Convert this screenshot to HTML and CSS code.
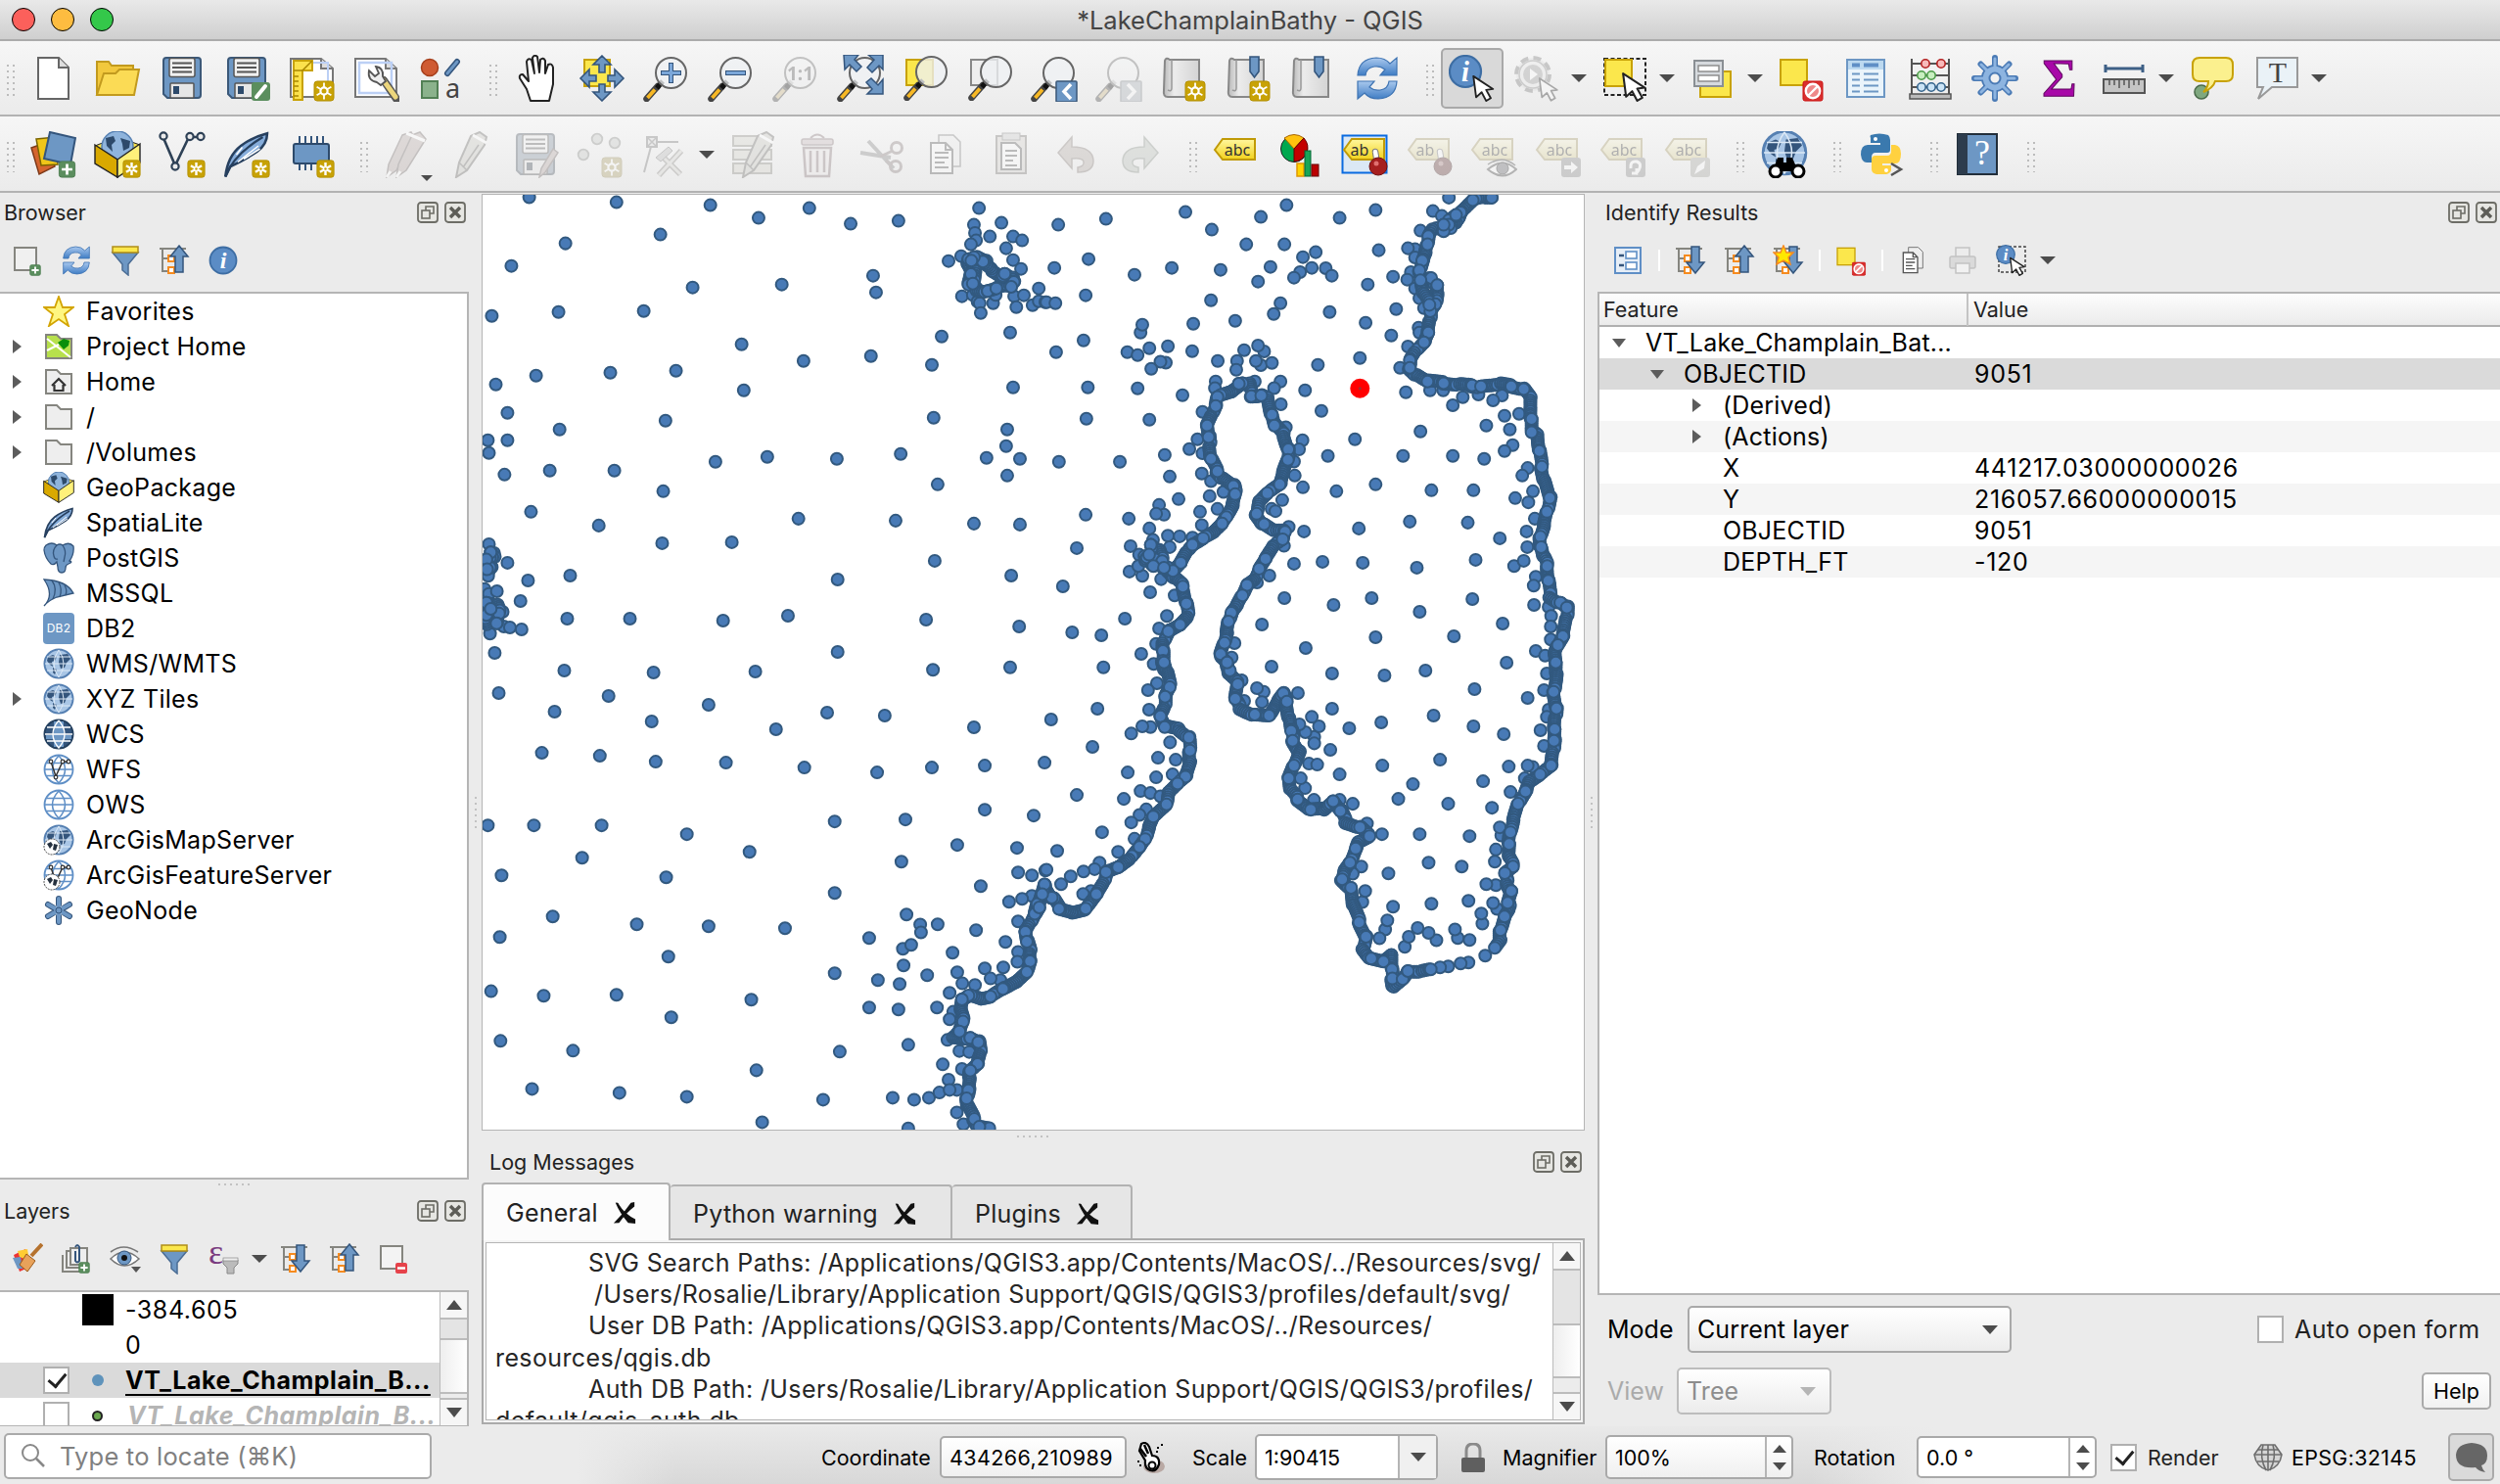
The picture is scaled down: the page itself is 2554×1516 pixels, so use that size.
FILE: index.html
```html
<!DOCTYPE html>
<html lang="en">
<head>
<meta charset="utf-8">
<title>*LakeChamplainBathy - QGIS</title>
<link rel="stylesheet" href="styles.css">
</head>
<body>
<svg class="defs" width="0" height="0" aria-hidden="true">
<defs>
<linearGradient id="paper" x1="0" y1="0" x2="1" y2="0"><stop offset="0" stop-color="#b9b9b9"/><stop offset=".3" stop-color="#ececec"/><stop offset="1" stop-color="#d4d4d4"/></linearGradient>
<linearGradient id="swirl" x1="0" y1="0" x2="0" y2="1"><stop offset="0" stop-color="#a9c8ee"/><stop offset="1" stop-color="#3f7dc4"/></linearGradient>
<linearGradient id="tagfill" x1="0" y1="0" x2="0" y2="1"><stop offset="0" stop-color="#fff7a0"/><stop offset="1" stop-color="#f2d21c"/></linearGradient>

<symbol id="badge-star" viewBox="0 0 22 22"><rect x="1" y="1" width="20" height="20" rx="3" fill="#c8a206" stroke="#b38f00" stroke-width="1"/><path d="M11 3.500V18.500M4.500 7.200L17.500 14.800M17.500 7.200L4.500 14.800" stroke="#fff" stroke-width="2.800"/><circle cx="11" cy="11" r="1.400" fill="#c8a206"/></symbol>
<symbol id="badge-sun" viewBox="0 0 22 22"><rect x="1" y="1" width="20" height="20" rx="3" fill="#c8a206" stroke="#b38f00" stroke-width="1"/><path d="M11 2.500V19.500M3.600 6.700L18.400 15.300M18.400 6.700L3.600 15.300" stroke="#fff" stroke-width="1.800"/><circle cx="11" cy="11" r="3.600" fill="#c8a206" stroke="#fff" stroke-width="2.200"/></symbol>
<symbol id="badge-plus" viewBox="0 0 20 20"><rect x="1" y="1" width="18" height="18" rx="3" fill="#5b8e5e" stroke="#4a7a4d"/><path d="M10 4V16M4 10H16" stroke="#fff" stroke-width="3"/></symbol>
<symbol id="badge-no" viewBox="0 0 22 22"><rect x="1" y="1" width="20" height="20" rx="2" fill="#d8302f" stroke="#c11"/><circle cx="11" cy="11" r="7.200" fill="#e88" stroke="#fff" stroke-width="2.400"/><path d="M6.500 15.500L15.500 6.500" stroke="#fff" stroke-width="2.400"/></symbol>
<symbol id="cursor" viewBox="0 0 26 30"><path d="M2 2L5 25L11 19.500L16 29L21 26L16 17L23.500 16Z" fill="#fff" stroke="#222" stroke-width="2" stroke-linejoin="round"/></symbol>
<symbol id="lens" viewBox="0 0 48 48"><path d="M3.500 45L15 32" stroke="#444" stroke-width="6.500" stroke-linecap="round"/><path d="M4.500 44L12 35.500" stroke="#f7b824" stroke-width="3.800"/><path d="M14 34L20 27" stroke="#111" stroke-width="5"/><circle cx="28.500" cy="18.500" r="15.500" fill="#eef1f3" fill-opacity=".78" stroke="#666" stroke-width="2"/></symbol>
<symbol id="floppy" viewBox="0 0 48 48"><path d="M8 3H40Q43 3 43 6V41Q43 44 40 44H9L5 40V6Q5 3 8 3Z" fill="#6d97c4" stroke="#3b5878" stroke-width="2"/><rect x="11" y="3.500" width="26" height="19" rx="2" fill="#f0f0f0" stroke="#555" stroke-width="1.500"/><path d="M14 8.500H34M14 13H34M14 17.500H34" stroke="#555" stroke-width="2"/><rect x="12" y="29" width="24" height="15" rx="1" fill="#e6e6e6" stroke="#555" stroke-width="1.500"/><rect x="15" y="32" width="6" height="8" fill="#2d4a6b"/></symbol>
<symbol id="scroll" viewBox="0 0 48 48"><path d="M10 5H40V43H8Q3 43 4 36L5 6Q6 2 10 5Z" fill="url(#paper)" stroke="#888" stroke-width="2"/><path d="M12 5V34Q12 38 8 36" fill="none" stroke="#999" stroke-width="1.500"/></symbol>
<symbol id="globe" viewBox="0 0 32 32"><circle cx="16" cy="16" r="14.500" fill="#a9c6e6" stroke="#5680b2" stroke-width="2"/><path d="M5 9L10 7L14 9L12 13L9 14L10 19L7 17L4 13ZM17 7L25 6L28 11L24 15L22 20L18 21L16 15ZM10 20L14 22L12 27L10 25Z" fill="#34557c"/><path d="M2 16H30M4 9H28M4 23H28M16 2Q6 16 16 30Q26 16 16 2" fill="none" stroke="#dce9f6" stroke-width="1"/></symbol>
<symbol id="wire" viewBox="0 0 32 32"><circle cx="16" cy="16" r="14.500" fill="#fff" stroke="#5f8fc6" stroke-width="1.800"/><path d="M2 16H30M4 9.500H28M4 22.500H28M16 2Q3 16 16 30Q29 16 16 2" fill="none" stroke="#5f8fc6" stroke-width="1.500"/></symbol>
<symbol id="feather" viewBox="0 0 32 32"><path d="M1.500 31Q3 17 12 10Q20 4 30 1.500Q30 9 23 14Q14 20 5 24Z" fill="#86addb" stroke="#27405f" stroke-width="1.700"/><path d="M1.500 31Q7 16 27 4" fill="none" stroke="#27405f" stroke-width="1.500"/><path d="M10 21L24 10M14 19L25 12M9 16L13 11" stroke="#fff" stroke-width="1"/></symbol>
<symbol id="vee" viewBox="0 0 48 48"><path d="M5 7L17 35L31 6H43" fill="none" stroke="#2e4156" stroke-width="2.600"/><g fill="#ececec" stroke="#2e4156" stroke-width="2.200"><circle cx="5" cy="5" r="3.600"/><circle cx="17" cy="36" r="3.600"/><circle cx="32" cy="5.500" r="3.600"/><circle cx="43" cy="5.500" r="3.600"/></g></symbol>
<symbol id="tag" viewBox="0 0 48 48"><path d="M3 19L11 8H44V29H11Z" fill="url(#tagfill)" stroke="#c09a06" stroke-width="2"/></symbol>
<symbol id="pen" viewBox="0 0 48 48"><path d="M24 5L33 1L40 6L38 14L20 40L9 47L12 32Z" fill="#c9c8b4" stroke="#6b675d" stroke-width="2"/><path d="M12 32L20 40M32 14L16 37" stroke="#6b675d" stroke-width="1.500"/><path d="M26 4L40 12" stroke="#fff" stroke-width="3"/></symbol>
<symbol id="folder" viewBox="0 0 32 32"><path d="M3 4H14L18 8H29V28H3Z" fill="#eee" stroke="#85857f" stroke-width="2"/></symbol>

<symbol id="i-new" viewBox="0 0 48 48"><path d="M9 3H30L40 13V45H9Z" fill="#fff" stroke="#666" stroke-width="2"/><path d="M30 3V13H40" fill="#ddd" stroke="#666" stroke-width="2"/></symbol>
<symbol id="i-open" viewBox="0 0 48 48"><path d="M3 41V7H15L18 11H40V18" fill="#f2c83d" stroke="#c29a1e" stroke-width="2"/><path d="M3 41L10 19L22 19L26 15H46L41 41Z" fill="#fbdb55" stroke="#c29a1e" stroke-width="2"/></symbol>
<symbol id="i-saveas" viewBox="0 0 48 48"><use href="#floppy"/><rect x="29" y="28" width="19" height="19" rx="3" fill="#5b8e5e"/><path d="M34 43L43 32" stroke="#fff" stroke-width="4" stroke-linecap="round"/></symbol>
<symbol id="i-newlayout" viewBox="0 0 48 48"><path d="M3 4H34L46 14V43H3Z" fill="#fff" stroke="#777" stroke-width="2"/><path d="M34 4V14H46" fill="#ddd" stroke="#777" stroke-width="2"/><path d="M20 8H41V38" fill="none" stroke="#bcd0f5" stroke-width="2"/><path d="M6 6H25V16H15V46H6Z" fill="#fbe14c" stroke="#c8a206" stroke-width="2"/><path d="M6 22H11M6 27H11M6 32H11M6 37H11M6 42H11M6 16L15 16L25 6" stroke="#a88600" stroke-width="1.500" fill="none"/><use href="#badge-sun" x="26" y="26" width="22" height="22"/></symbol>
<symbol id="i-layoutmgr" viewBox="0 0 48 48"><path d="M3 4H34L45 14V43H3Z" fill="#fff" stroke="#777" stroke-width="2"/><path d="M34 4V14H45" fill="#ddd" stroke="#777" stroke-width="2"/><rect x="7" y="8" width="33" height="31" fill="none" stroke="#bcd0f5" stroke-width="2.500"/><path d="M32 26L45 45" stroke="#555" stroke-width="8" stroke-linecap="round"/><path d="M31 25L44 43" stroke="#ecd67c" stroke-width="5" stroke-linecap="round"/><path d="M17 16Q15 26 25 28L29 31L34 27L31 22Q32 13 24 12L27 19L23 22Z" fill="#eee" stroke="#555" stroke-width="1.800"/></symbol>
<symbol id="i-style" viewBox="0 0 48 48"><circle cx="13" cy="13" r="8.500" fill="#cf5b33" stroke="#a63f1c" stroke-width="1.500"/><path d="M31 19L41 7" stroke="#34557c" stroke-width="6" stroke-linecap="round"/><path d="M31 19L41 7" stroke="#6d97c4" stroke-width="3" stroke-linecap="round"/><rect x="5" y="27" width="16" height="17" fill="#8bb28c" stroke="#528055" stroke-width="2"/><text x="29" y="44" class="glyph-a">a</text></symbol>
<symbol id="i-hand" viewBox="0 0 48 48"><path d="M17 47L13 35L6 24Q5 20 9 20L15 27L13 7Q14 3 18 5L21 19L19 3Q21 -1 24 2L26 18L27 5Q30 2 32 6L32 19L35 10Q39 8 40 13L40 30L36 47Z" fill="#fff" stroke="#222" stroke-width="2" stroke-linejoin="round"/></symbol>
<symbol id="i-pansel" viewBox="0 0 48 48"><rect x="6" y="5" width="26" height="27" fill="#fbe74c" stroke="#c8a206" stroke-width="2"/><path d="M24 1L33 10H27V18H21V10H15ZM24 47L33 38H27V30H21V38H15ZM2 24L11 15V21H18V27H11V33ZM46 24L37 15V21H30V27H37V33Z" fill="#6d97c4" stroke="#34557c" stroke-width="1.600"/></symbol>
<symbol id="i-zin" viewBox="0 0 48 48"><use href="#lens"/><path d="M28.500 8V29M18 18.500H39" stroke="#34557c" stroke-width="5"/><path d="M28.500 9V28M19 18.500H38" stroke="#7ba7d9" stroke-width="3"/></symbol>
<symbol id="i-zout" viewBox="0 0 48 48"><use href="#lens"/><path d="M18 18.500H39" stroke="#34557c" stroke-width="5"/><path d="M19 18.500H38" stroke="#7ba7d9" stroke-width="3"/></symbol>
<symbol id="i-z11" viewBox="0 0 48 48"><use href="#lens"/><text x="28.500" y="26" text-anchor="middle" class="glyph-11">1:1</text></symbol>
<symbol id="i-zfull" viewBox="0 0 48 48"><use href="#lens"/><path d="M7 0H22L18 5L25 12L20 17L13 10L8 15ZM47 0V15L43 11L36 18L31 13L38 5L32 0ZM47 40H31L36 35L30 28L35 24L42 31L47 25Z" fill="#6d97c4" stroke="#34557c" stroke-width="1.500"/></symbol>
<symbol id="i-zsel" viewBox="0 0 48 48"><rect x="5" y="5" width="27" height="26" fill="#fbe74c" stroke="#c8a206" stroke-width="2"/><use href="#lens" x="2" y="-1"/></symbol>
<symbol id="i-zlayer" viewBox="0 0 48 48"><rect x="5" y="5" width="27" height="26" fill="#eee" stroke="#888" stroke-width="2"/><use href="#lens" x="2" y="-1"/></symbol>
<symbol id="i-zlast" viewBox="0 0 48 48"><use href="#lens"/><rect x="26" y="27" width="21" height="21" rx="1" fill="#6d97c4" stroke="#3b5878" stroke-width="1.500"/><path d="M41 30L34 37.500L41 45" fill="none" stroke="#fff" stroke-width="3.500"/></symbol>
<symbol id="i-znext" viewBox="0 0 48 48"><use href="#lens"/><rect x="26" y="27" width="21" height="21" rx="1" fill="#9fb0c4" stroke="#7b8898" stroke-width="1.500"/><path d="M33 30L40 37.500L33 45" fill="none" stroke="#fff" stroke-width="3.500"/></symbol>
<symbol id="i-mapview" viewBox="0 0 48 48"><use href="#scroll"/><use href="#badge-sun" x="25" y="26" width="22" height="22"/></symbol>
<symbol id="i-bmnew" viewBox="0 0 48 48"><use href="#scroll"/><path d="M26 2H35V17L30.500 23L26 17Z" fill="#6d97c4" stroke="#34557c" stroke-width="1.600"/><use href="#badge-sun" x="25" y="26" width="22" height="22"/></symbol>
<symbol id="i-bm" viewBox="0 0 48 48"><use href="#scroll"/><path d="M26 2H35V17L30.500 23L26 17Z" fill="#6d97c4" stroke="#34557c" stroke-width="1.600"/></symbol>
<symbol id="i-refresh" viewBox="0 0 48 48"><path d="M4 21Q5 4 23 3Q32 3 37 9L44 3V21H27L32 15Q27 11 21 12Q13 13 12 21Z" fill="url(#swirl)" stroke="#3f74b3" stroke-width="1.200"/><path d="M44 27Q43 44 25 45Q16 45 11 39L4 45V27H21L16 33Q21 37 27 36Q35 35 36 27Z" fill="url(#swirl)" stroke="#3f74b3" stroke-width="1.200"/></symbol>
<symbol id="i-info" viewBox="0 0 32 32"><circle cx="16" cy="16" r="13.500" fill="#5b8cc5" stroke="#3d6da3" stroke-width="1.800"/><text x="16" y="24" text-anchor="middle" class="glyph-i">i</text></symbol>
<symbol id="i-identify" viewBox="0 0 48 48"><use href="#i-info" x="-2" y="-2" width="38" height="38"/><use href="#cursor" x="23" y="20" width="25" height="28"/></symbol>
<symbol id="gearshape" viewBox="0 0 48 48"><path d="M24 3V45M3 24H45M9.500 9.500L38.500 38.500M38.500 9.500L9.500 38.500" stroke="#4a7ab5" stroke-width="6" stroke-linecap="round"/><circle cx="24" cy="24" r="14" fill="#4a7ab5"/><path d="M24 4V44M4 24H44M10 10L38 38M38 10L10 38" stroke="#8db4e0" stroke-width="3" stroke-linecap="round"/><circle cx="24" cy="24" r="12.200" fill="#8db4e0"/><circle cx="24" cy="24" r="5.500" fill="#f1f1f1" stroke="#4a7ab5" stroke-width="2"/></symbol>
<symbol id="i-action" viewBox="0 0 48 48"><circle cx="20" cy="20" r="17" fill="#ddd" stroke="#777" stroke-width="4" stroke-dasharray="8 5.350"/><circle cx="20" cy="20" r="14" fill="#e8e8e8" stroke="#888" stroke-width="1.500"/><circle cx="20" cy="20" r="10" fill="#999"/><path d="M17 14L25 20L17 26Z" fill="#fff"/><use href="#cursor" x="25" y="22" width="22" height="26"/></symbol>
<symbol id="i-select" viewBox="0 0 48 48"><rect x="3" y="4" width="42" height="37" fill="none" stroke="#222" stroke-width="2" stroke-dasharray="4 2.500"/><rect x="4" y="5" width="27" height="27" fill="#fbe74c" stroke="#c8a206" stroke-width="2"/><use href="#cursor" x="19" y="17" width="29" height="31"/></symbol>
<symbol id="i-form" viewBox="0 0 48 48"><rect x="11" y="17" width="31" height="26" fill="#fbe74c" stroke="#c8a206" stroke-width="2"/><rect x="5" y="6" width="29" height="26" fill="#d6dade" stroke="#8a8f94" stroke-width="2"/><rect x="9" y="11" width="21" height="6" fill="#fff" stroke="#888" stroke-width="1.400"/><rect x="9" y="21" width="21" height="6" fill="#fff" stroke="#888" stroke-width="1.400"/></symbol>
<symbol id="i-desel" viewBox="0 0 48 48"><rect x="3" y="5" width="27" height="26" fill="#fbe74c" stroke="#c8a206" stroke-width="2"/><use href="#badge-no" x="25" y="26" width="22" height="22"/></symbol>
<symbol id="i-table" viewBox="0 0 48 48"><rect x="5" y="5" width="38" height="38" fill="#eaf4fb" stroke="#6d97c4" stroke-width="2"/><rect x="6" y="6" width="36" height="9" fill="#bcd9f0"/><path d="M10 10.500H18M22 10.500H37" stroke="#5f8fc6" stroke-width="4"/><path d="M10 19.500H18M22 19.500H37M10 25.500H18M22 25.500H37M10 31.500H18M22 31.500H37M10 37.500H18M22 37.500H37" stroke="#6d97c4" stroke-width="2"/></symbol>
<symbol id="i-abacus" viewBox="0 0 48 48"><path d="M5 4V41M43 4V41M4 9H44M4 21H44M4 33H44" stroke="#555" stroke-width="2" fill="none"/><rect x="3" y="40" width="42" height="5" fill="#bbb" stroke="#555" stroke-width="1.500"/><g stroke-width="1.600"><g fill="#f7baba" stroke="#b32020"><circle cx="19" cy="9" r="4.200"/><circle cx="35" cy="9" r="4.200"/></g><g fill="#c8eec0" stroke="#4b9a48"><circle cx="15" cy="21" r="4.200"/><circle cx="25" cy="21" r="4.200"/></g><g fill="#cbe4f6" stroke="#34648c"><circle cx="15" cy="33" r="4.200"/><circle cx="25" cy="33" r="4.200"/><circle cx="35" cy="33" r="4.200"/></g></g></symbol>
<symbol id="i-sigma" viewBox="0 0 48 48"><text x="24" y="42" text-anchor="middle" class="glyph-sigma">Σ</text></symbol>
<symbol id="i-measure" viewBox="0 0 48 48"><path d="M5 14H43M5 10V18M43 10V18" stroke="#3d5f85" stroke-width="3"/><rect x="3" y="25" width="42" height="14" fill="#c4c4c4" stroke="#555" stroke-width="2"/><path d="M9 26V31M14 26V31M19 26V34M24 26V31M29 26V34M34 26V31M39 26V31" stroke="#555" stroke-width="1.500"/></symbol>
<symbol id="i-tip" viewBox="0 0 48 48"><circle cx="13" cy="38" r="7" fill="#7fa87f" stroke="#4b6b4b" stroke-width="1.600"/><path d="M11 3H38Q45 3 45 10V20Q45 27 38 27H27Q25 34 15 38Q20 33 20 27H11Q4 27 4 20V10Q4 3 11 3Z" fill="#fbf08e" stroke="#c8a206" stroke-width="2"/></symbol>
<symbol id="i-textann" viewBox="0 0 48 48"><path d="M4 3H45V33H19L5 45L10 33H4Z" fill="#eaf2f7" stroke="#999" stroke-width="2"/><text x="25" y="28" text-anchor="middle" class="glyph-t">T</text></symbol>

<symbol id="i-dsm" viewBox="0 0 48 48"><path d="M2 17L16 12L26 36L10 44Z" fill="#d5652f" stroke="#7e3a1a" stroke-width="1.500"/><path d="M7 8L27 6L29 34L12 35Z" fill="#f0c619" stroke="#7a6400" stroke-width="1.500"/><path d="M21 1L47 7L42 34L15 28Z" fill="#6d97c4" stroke="#34557c" stroke-width="2"/><use href="#badge-plus" x="29" y="30" width="19" height="18"/></symbol>
<symbol id="boxglobe" viewBox="0 0 48 48"><path d="M1 15L24 6L47 14L24 28Z" fill="#f7e04a" stroke="#222" stroke-width="1"/><circle cx="24" cy="16" r="16" fill="#8fb4dc" stroke="#5680b2" stroke-width="1.500"/><path d="M12 7L20 5L22 10L18 14L19 21L13 15ZM27 7L37 10L36 17L30 20L29 13Z" fill="#2d4a6b"/><path d="M1 14L24 29V47L1 33Z" fill="#d9a900" stroke="#222" stroke-width="1.400"/><path d="M47 13L24 29V47L47 32Z" fill="#fff17a" stroke="#222" stroke-width="1.400"/></symbol>
<symbol id="i-gpkg" viewBox="0 0 48 48"><use href="#boxglobe"/><use href="#badge-star" x="29" y="29" width="19" height="19"/></symbol>
<symbol id="i-vnew" viewBox="0 0 48 48"><use href="#vee"/><use href="#badge-star" x="29" y="29" width="19" height="19"/></symbol>
<symbol id="i-feather" viewBox="0 0 48 48"><use href="#feather" x="0" y="0" width="48" height="48"/><use href="#badge-star" x="29" y="29" width="19" height="19"/></symbol>
<symbol id="i-chip" viewBox="0 0 48 48"><path d="M12 5V12M18 5V12M24 5V12M30 5V12M36 5V12M12 33V40M18 33V40M24 33V40" stroke="#34557c" stroke-width="2"/><rect x="6" y="13" width="36" height="20" rx="2" fill="#6d97c4" stroke="#2d4a6b" stroke-width="2"/><use href="#badge-star" x="29" y="29" width="19" height="19"/></symbol>
<symbol id="i-pencils" viewBox="0 0 48 48"><g fill="#c9a39b" stroke="#7c625d" stroke-width="1.500"><path d="M20 4L29 1L33 8L14 40L4 47L6 34Z"/><path d="M30 4L38 1L44 8L24 40L14 47L16 34Z"/></g><path d="M24 2L43 10M4 47L8 41M14 47L18 41" stroke="#fff" stroke-width="3"/></symbol>
<symbol id="i-saveed" viewBox="0 0 48 48"><use href="#floppy"/><path d="M42 18L47 22L34 42L28 47L30 38Z" fill="#c9a39b" stroke="#7c625d" stroke-width="1.500"/></symbol>
<symbol id="i-addpts" viewBox="0 0 48 48"><g fill="#c4c9c0" stroke="#858a80" stroke-width="1.800"><circle cx="21" cy="8" r="5.300"/><circle cx="39" cy="12" r="5.300"/><circle cx="7" cy="24" r="5.300"/></g><use href="#badge-sun" x="25" y="26" width="22" height="22"/></symbol>
<symbol id="i-vertex" viewBox="0 0 48 48"><path d="M11 12L3 42M11 11H38" stroke="#777" stroke-width="2"/><rect x="6" y="6" width="10" height="10" fill="#ddd" stroke="#777" stroke-width="2"/><path d="M6 6L16 16M16 6L6 16" stroke="#777" stroke-width="1.500"/><path d="M20 24L40 44M41 20L18 45" stroke="#8d887c" stroke-width="6"/><path d="M20 24L40 44M41 20L18 45" stroke="#d8d4c8" stroke-width="3"/><path d="M15 27L28 16L32 20L20 31Z" fill="#bbb" stroke="#777"/></symbol>
<symbol id="i-attrs" viewBox="0 0 48 48"><g fill="#d8d3bd" stroke="#8f8a74" stroke-width="2"><rect x="4" y="5" width="39" height="10"/><rect x="4" y="19" width="39" height="10"/><rect x="4" y="33" width="39" height="10"/></g><use href="#pen" x="5"/></symbol>
<symbol id="i-trash" viewBox="0 0 48 48"><path d="M17 7Q24 0 31 7" fill="none" stroke="#a07078" stroke-width="2"/><rect x="8" y="8" width="32" height="6" rx="2" fill="#d9b5ba" stroke="#a07078" stroke-width="1.500"/><path d="M10 17H38L36 46H12Z" fill="#f3e4e6" stroke="#a07078" stroke-width="2.500"/><path d="M17 20V42M24 20V42M31 20V42" stroke="#a07078" stroke-width="2.500"/></symbol>
<symbol id="i-cut" viewBox="0 0 48 48"><path d="M2 22L33 27M10 10L36 38" stroke="#888" stroke-width="4"/><circle cx="39" cy="17" r="5.500" fill="none" stroke="#9a7a7a" stroke-width="3"/><circle cx="38" cy="36" r="5.500" fill="none" stroke="#9a7a7a" stroke-width="3"/><path d="M22 26L35 20M28 30L34 35" stroke="#9a7a7a" stroke-width="3"/></symbol>
<symbol id="i-copy" viewBox="0 0 48 48"><path d="M16 4H31L38 11V36H16Z" fill="#eee" stroke="#777" stroke-width="1.500"/><path d="M8 12H23L30 19V43H8Z" fill="#fff" stroke="#555" stroke-width="2"/><path d="M23 12V19H30M12 22H26M12 27H26M12 32H22M12 37H26" fill="none" stroke="#555" stroke-width="2"/></symbol>
<symbol id="i-paste" viewBox="0 0 48 48"><rect x="9" y="5" width="30" height="38" fill="#d9cfc4" stroke="#7d746a" stroke-width="2"/><rect x="15" y="2" width="18" height="7" fill="#ccc" stroke="#777"/><path d="M14 12H28L34 18V39H14Z" fill="#fff" stroke="#555" stroke-width="2"/><path d="M18 20H30M18 25H30M18 30H26M18 35H30" stroke="#555" stroke-width="2"/></symbol>
<symbol id="i-undo" viewBox="0 0 48 48"><path d="M6 22L20 6V16Q41 16 42 30Q42 42 26 42V37Q33 36 32 31Q31 27 20 28V38Z" fill="#c3aa9a" stroke="#94796a" stroke-width="1.500"/></symbol>
<symbol id="i-redo" viewBox="0 0 48 48"><path d="M42 22L28 6V16Q7 16 6 30Q6 42 22 42V37Q15 36 16 31Q17 27 28 28V38Z" fill="#b3c3b0" stroke="#7d937c" stroke-width="1.500"/></symbol>
<symbol id="i-abc" viewBox="0 0 48 48"><use href="#tag"/><text x="26" y="25" text-anchor="middle" class="glyph-abc">abc</text></symbol>
<symbol id="i-diag" viewBox="0 0 48 48"><circle cx="18" cy="18" r="13.500" fill="#00a84f" stroke="#222"/><path d="M18 18L8 7Q18 0 28 7Z" fill="#ffc20e" stroke="#a60"/><path d="M18 18L28 7Q34 14 31 22Q26 31 18 31Z" fill="#c40000" stroke="#600"/><rect x="21" y="33" width="7" height="13" fill="#ffd400" stroke="#e09800" stroke-width="1.500"/><rect x="29" y="20" width="6" height="26" fill="#18a558" stroke="#063"/><rect x="36" y="34" width="7" height="12" fill="#b00" stroke="#600"/></symbol>
<symbol id="pin" viewBox="0 0 48 48"><path d="M35 21L37 33" stroke="#777" stroke-width="6.500" stroke-linecap="round"/><path d="M35 21L37 33" stroke="#fff" stroke-width="4.500" stroke-linecap="round"/><circle cx="38" cy="36" r="9" fill="#a61f1f" stroke="#6e1010"/><circle cx="36" cy="33" r="2.500" fill="#e07070"/></symbol>
<symbol id="i-abpin" viewBox="0 0 48 48"><use href="#tag"/><text x="20" y="25" text-anchor="middle" class="glyph-abc">ab</text><use href="#pin"/></symbol>
<symbol id="i-abpinsel" viewBox="0 0 48 48"><rect x="1.500" y="4.500" width="45" height="38" fill="#dbe8f5" stroke="#0a6be0" stroke-width="2"/><use href="#tag"/><text x="19" y="25" text-anchor="middle" class="glyph-abc">ab</text><use href="#pin"/></symbol>
<symbol id="i-abceye" viewBox="0 0 48 48"><use href="#i-abc" x="-1"/><path d="M18 39Q33 26 47 39Q33 52 18 39Z" fill="#fff" stroke="#444" stroke-width="2"/><circle cx="33" cy="38" r="6" fill="#667" stroke="#222"/><path d="M18 34Q33 24 46 35" fill="none" stroke="#444" stroke-width="1.500"/></symbol>
<symbol id="i-abcarr" viewBox="0 0 48 48"><use href="#i-abc" x="-1"/><rect x="27" y="27" width="20" height="20" rx="3" fill="#8c8c8c"/><path d="M30 35H37V31L44 37L37 43V39H30Z" fill="#fff"/></symbol>
<symbol id="i-abcrot" viewBox="0 0 48 48"><use href="#i-abc" x="-1"/><rect x="27" y="27" width="20" height="20" rx="3" fill="#8c8c8c"/><path d="M32 38Q31 30 38 31Q44 33 40 40L37 44M33 43H38V38" fill="none" stroke="#fff" stroke-width="3"/></symbol>
<symbol id="i-abcpen" viewBox="0 0 48 48"><use href="#i-abc" x="-1"/><rect x="27" y="27" width="20" height="20" rx="3" fill="#a9a798"/><path d="M31 44L34 36L42 30L41 38Z" fill="#fff"/></symbol>
<symbol id="i-globebino" viewBox="0 0 48 48"><use href="#globe" x="0" y="-2" width="48" height="48"/><path d="M12 41L17 27H23V32H26V27H32L38 41Z" fill="#000"/><circle cx="15" cy="41" r="6" fill="#fff" stroke="#000" stroke-width="3"/><circle cx="38" cy="41" r="6" fill="#fff" stroke="#000" stroke-width="3"/><rect x="19" y="33" width="14" height="8" fill="#000"/></symbol>
<symbol id="i-python" viewBox="0 0 48 48"><path d="M13 4Q22 1 31 4Q33 6 33 9V19Q33 22 30 22H18Q14 22 14 27V32H9Q4 32 3 24Q3 14 10 14H23V12H13V7Q12 5 13 4Z" fill="#3a79ae"/><path d="M34 14H38Q44 15 44 23Q44 33 38 33H25V35H34V40Q33 43 29 44H19Q14 43 14 39V29Q14 25 18 25H30Q34 25 34 20Z" fill="#ffd13f"/><circle cx="18" cy="8" r="2" fill="#fff"/><circle cx="29" cy="40" r="2" fill="#fff"/><path d="M34 33L44 39L34 45" fill="none" stroke="#555" stroke-width="2.500"/></symbol>
<symbol id="i-help" viewBox="0 0 48 48"><rect x="3" y="3" width="40" height="41" fill="#6d97c4" stroke="#222e3a" stroke-width="2"/><rect x="3" y="3" width="10" height="41" fill="#2d3c4d"/><text x="28" y="34" text-anchor="middle" class="glyph-q">?</text></symbol>

<symbol id="s-add" viewBox="0 0 32 32"><rect x="3" y="3" width="22" height="23" fill="#f0f0f0" stroke="#85857f" stroke-width="2"/><use href="#badge-plus" x="18" y="20" width="12" height="12"/></symbol>
<symbol id="s-filter" viewBox="0 0 32 32"><path d="M3 8H29L19 20V31L13 26V20Z" fill="#6d97c4" stroke="#4a6c94" stroke-width="1.500"/><rect x="3" y="2" width="26" height="6" fill="#fbe74c" stroke="#b08e1a" stroke-width="1.500"/></symbol>
<symbol id="s-tree" viewBox="0 0 32 32"><path d="M1 4H28M4 4V27H11M4 14H11" fill="none" stroke="#85857f" stroke-width="2"/><rect x="10" y="11" width="6" height="6" fill="#fff" stroke="#f68b1f" stroke-width="2"/><rect x="10" y="23" width="6" height="6" fill="#fff" stroke="#f68b1f" stroke-width="2"/></symbol>
<symbol id="s-up" viewBox="0 0 32 32"><use href="#s-tree"/><path d="M21 1L30 12H25V28H17V12H12Z" fill="#6d97c4" stroke="#34557c" stroke-width="1.500"/></symbol>
<symbol id="s-down" viewBox="0 0 32 32"><use href="#s-tree"/><path d="M21 29L30 18H25V2H17V18H12Z" fill="#6d97c4" stroke="#34557c" stroke-width="1.500"/></symbol>
<symbol id="s-stardown" viewBox="0 0 32 32"><use href="#s-down"/><path d="M11 1L14 8L21 8L16 13L18 20L11 16L4 20L6 13L1 8L8 8Z" fill="#ffe800" stroke="#f68b1f" stroke-width="1.500"/></symbol>
<symbol id="s-brush" viewBox="0 0 32 32"><path d="M2 12L14 6L19 24L8 29Z" fill="#e33"/><path d="M6 8L16 6L18 18L8 14Z" fill="#fc3"/><path d="M1 15L9 14L11 26L6 26Z" fill="#6d97c4"/><path d="M31 1L20 13" stroke="#b5722e" stroke-width="4"/><path d="M15 11L24 18L16 29L8 22Z" fill="#e8a25a" stroke="#9a5b1c"/></symbol>
<symbol id="s-group" viewBox="0 0 32 32"><path d="M2 12V29H20" fill="none" stroke="#85857f" stroke-width="2"/><path d="M6 8V25H22V8Z" fill="none" stroke="#85857f" stroke-width="2"/><rect x="10" y="5" width="17" height="17" fill="#eee" stroke="#85857f" stroke-width="2"/><path d="M15 8V18Q17 21 19 18V4Q17 0 15 4" fill="none" stroke="#34557c" stroke-width="2"/><use href="#badge-plus" x="18" y="19" width="12" height="12"/></symbol>
<symbol id="s-eye" viewBox="0 0 32 32"><path d="M1 9Q14 -1 29 9" fill="none" stroke="#777" stroke-width="1.600"/><path d="M1 16Q15 2 30 16Q15 30 1 16Z" fill="#fff" stroke="#777" stroke-width="1.600"/><circle cx="15" cy="15" r="7" fill="#6d97c4" stroke="#34557c"/><circle cx="15" cy="15" r="3" fill="#111"/><path d="M22 24H32L27 30Z" fill="#555"/></symbol>
<symbol id="s-expr" viewBox="0 0 32 32"><text x="1" y="21" class="glyph-eps">ε</text><path d="M16 17H31V21L27 25V31H20V25L16 21Z" fill="#bbb" stroke="#888"/><rect x="16" y="15" width="15" height="3" fill="#eee" stroke="#888" stroke-width=".7"/></symbol>
<symbol id="s-remove" viewBox="0 0 32 32"><rect x="3" y="3" width="22" height="23" fill="#f3f3f3" stroke="#85857f" stroke-width="2"/><rect x="18" y="20" width="12" height="11" rx="2" fill="#e6424a"/><path d="M20 25.500H28" stroke="#fff" stroke-width="2.500"/></symbol>
<symbol id="s-form" viewBox="0 0 32 32"><rect x="3" y="3" width="26" height="26" fill="#e6eef7" stroke="#5f8fc6" stroke-width="2"/><path d="M7 11H12M7 21H12" stroke="#34557c" stroke-width="2.500"/><rect x="14" y="7" width="11" height="7" fill="#fff" stroke="#5f8fc6" stroke-width="1.600"/><rect x="14" y="18" width="11" height="7" fill="#fff" stroke="#5f8fc6" stroke-width="1.600"/></symbol>
<symbol id="s-print" viewBox="0 0 32 32"><rect x="9" y="3" width="14" height="10" fill="#eee" stroke="#777" stroke-width="1.500"/><rect x="3" y="12" width="26" height="12" rx="2" fill="#bbb" stroke="#777" stroke-width="1.500"/><rect x="9" y="19" width="14" height="10" fill="#fff" stroke="#777" stroke-width="1.500"/></symbol>
<symbol id="s-idsel" viewBox="0 0 32 32"><rect x="3" y="2" width="27" height="26" fill="none" stroke="#444" stroke-width="1.500" stroke-dasharray="3 2"/><use href="#i-info" x="-1" y="-1" width="22" height="22"/><use href="#cursor" x="13" y="12" width="18" height="20"/></symbol>

<symbol id="t-star" viewBox="0 0 32 32"><path d="M16 1L20 12H31L22 19L26 31L16 24L6 31L10 19L1 12H12Z" fill="#fff681" stroke="#d3a400" stroke-width="1.800"/></symbol>
<symbol id="t-project" viewBox="0 0 32 32"><path d="M3 4H14L18 8H29V28H3Z" fill="#b7e04c" stroke="#85857f" stroke-width="2"/><path d="M4 8L28 27M4 20L16 14" stroke="#fff" stroke-width="2"/><path d="M15 12L21 8L27 10L26 15L21 19Z" fill="#0a8f0a"/></symbol>
<symbol id="t-home" viewBox="0 0 32 32"><use href="#folder"/><path d="M9 20L16 13L23 20M11.500 19V25H20.500V19" fill="none" stroke="#333" stroke-width="2.200"/></symbol>
<symbol id="t-pg" viewBox="0 0 32 32"><path d="M3 3Q9 -1 14 3Q17 1 20 3Q27 -1 31 4Q32 12 27 19Q31 20 26 22Q23 23 23 26Q23 31 19 31Q15 31 15 25L14 20Q11 24 8 22Q2 16 1 8Q1 5 3 3Z" fill="#6d97c4" stroke="#34557c" stroke-width="1.300"/><path d="M14 3Q9 8 11 14Q12 18 15 17M20 3Q24 9 22 15L21 20" fill="none" stroke="#34557c" stroke-width="1.300"/></symbol>
<symbol id="t-ms" viewBox="0 0 32 32"><path d="M1 2Q24 3 31 16L14 20Q6 23 1 29Q12 18 1 2Z" fill="#6d97c4" stroke="#34557c" stroke-width="1.300"/><path d="M9 3Q15 11 10 22M16 5Q20 12 17 20M22 8Q25 13 23 18" fill="none" stroke="#34557c" stroke-width="1.300"/></symbol>
<symbol id="t-db2" viewBox="0 0 32 32"><rect width="32" height="32" rx="4" fill="#6d97c4"/><text x="16" y="20" text-anchor="middle" class="glyph-db2">DB2</text></symbol>
<symbol id="t-wcs" viewBox="0 0 32 32"><circle cx="16" cy="16" r="14.500" fill="#34557c" stroke="#24405f" stroke-width="2"/><path d="M11 3H21V29H11ZM3 17H29V21H3Z" fill="#6d97c4"/><path d="M2 16H30M4 9H28M4 23H28M16 2Q4 16 16 30Q28 16 16 2" fill="none" stroke="#fff" stroke-width="1.300"/></symbol>
<symbol id="t-wfs" viewBox="0 0 32 32"><use href="#wire"/><path d="M8 8L13 23L20 8H26" fill="none" stroke="#333" stroke-width="1.500"/><g fill="#fff" stroke="#333" stroke-width="1.200"><circle cx="8" cy="8" r="1.800"/><circle cx="13" cy="24" r="1.800"/><circle cx="20" cy="8" r="1.800"/><circle cx="26" cy="8" r="1.800"/></g></symbol>
<symbol id="arc" viewBox="0 0 32 32"><circle cx="9" cy="23" r="8" fill="#fff" stroke="#444" stroke-width="1" stroke-dasharray="2 1"/><path d="M4 20L8 18L10 21L7 25ZM11 20L15 21L13 27L10 26Z" fill="#25313f"/></symbol>
<symbol id="t-arcmap" viewBox="0 0 32 32"><use href="#globe"/><use href="#arc"/></symbol>
<symbol id="t-arcfs" viewBox="0 0 32 32"><use href="#t-wfs"/><use href="#arc"/></symbol>
<symbol id="t-node" viewBox="0 0 32 32"><g stroke="#34557c" stroke-width="6" stroke-linecap="round"><path d="M16 4V10M16 22V28M5 10L10 13M22 19L27 22M27 10L22 13M10 19L5 22"/></g><g stroke="#6d97c4" stroke-width="4" stroke-linecap="round"><path d="M16 4V28M5 10L27 22M27 10L5 22"/></g><circle cx="16" cy="16" r="3" fill="#6d97c4" stroke="#34557c"/></symbol>
<symbol id="d-float" viewBox="0 0 22 22"><rect x="1" y="1" width="20" height="20" rx="3" fill="#e6e6e2" stroke="#6d6d66" stroke-width="1.800"/><path d="M9 9V5H17V12H13" fill="none" stroke="#6d6d66" stroke-width="1.600"/><rect x="5" y="9" width="8" height="8" fill="none" stroke="#6d6d66" stroke-width="1.600"/></symbol>
<symbol id="d-close" viewBox="0 0 22 22"><rect x="1" y="1" width="20" height="20" rx="3" fill="#e6e6e2" stroke="#6d6d66" stroke-width="1.800"/><path d="M6 6L16 16M16 6L6 16" stroke="#5d5d57" stroke-width="3.400"/></symbol>
<symbol id="x-tab" viewBox="0 0 26 26"><path d="M20 2L24 1L24 6Q15 13 7 24L1 24.500Q12 14 20 2Z" fill="#111"/><path d="M3 2Q6 1 7 4Q13 14 25 20L25 25L17 24Q8 14 3 2Z" fill="#111"/></symbol>
</defs>
</svg>

<div class="window">
<header class="titlebar">
  <div class="lights"><i class="red"></i><i class="amber"></i><i class="green"></i></div>
  <h1>*LakeChamplainBathy - QGIS</h1>
</header>

<nav class="toolbar">
  <span class="grip first"></span>
  <span class="tool"><svg><use href="#i-new"/></svg></span><span class="tool"><svg><use href="#i-open"/></svg></span><span class="tool"><svg><use href="#floppy"/></svg></span><span class="tool"><svg><use href="#i-saveas"/></svg></span><span class="tool"><svg><use href="#i-newlayout"/></svg></span><span class="tool"><svg><use href="#i-layoutmgr"/></svg></span><span class="tool"><svg><use href="#i-style"/></svg></span>
  <span class="grip"></span>
  <span class="tool"><svg><use href="#i-hand"/></svg></span><span class="tool"><svg><use href="#i-pansel"/></svg></span><span class="tool"><svg><use href="#i-zin"/></svg></span><span class="tool"><svg><use href="#i-zout"/></svg></span><span class="tool off"><svg><use href="#i-z11"/></svg></span><span class="tool"><svg><use href="#i-zfull"/></svg></span><span class="tool"><svg><use href="#i-zsel"/></svg></span><span class="tool"><svg><use href="#i-zlayer"/></svg></span><span class="tool"><svg><use href="#i-zlast"/></svg></span><span class="tool off"><svg><use href="#i-znext"/></svg></span><span class="tool"><svg><use href="#i-mapview"/></svg></span><span class="tool"><svg><use href="#i-bmnew"/></svg></span><span class="tool"><svg><use href="#i-bm"/></svg></span><span class="tool"><svg><use href="#i-refresh"/></svg></span>
  <span class="grip snug"></span>
  <span class="tool pressed"><svg><use href="#i-identify"/></svg></span><span class="tool off"><svg><use href="#i-action"/></svg></span><span class="drop"></span>
  <span class="tool"><svg><use href="#i-select"/></svg></span><span class="drop"></span>
  <span class="tool"><svg><use href="#i-form"/></svg></span><span class="drop"></span>
  <span class="tool"><svg><use href="#i-desel"/></svg></span><span class="tool"><svg><use href="#i-table"/></svg></span><span class="tool"><svg><use href="#i-abacus"/></svg></span><span class="tool"><svg><use href="#gearshape"/></svg></span><span class="tool"><svg><use href="#i-sigma"/></svg></span><span class="tool"><svg><use href="#i-measure"/></svg></span><span class="drop"></span>
  <span class="tool"><svg><use href="#i-tip"/></svg></span><span class="tool"><svg><use href="#i-textann"/></svg></span><span class="drop"></span>
</nav>

<nav class="toolbar second">
  <span class="grip first"></span>
  <span class="tool"><svg><use href="#i-dsm"/></svg></span><span class="tool"><svg><use href="#i-gpkg"/></svg></span><span class="tool"><svg><use href="#i-vnew"/></svg></span><span class="tool"><svg><use href="#i-feather"/></svg></span><span class="tool"><svg><use href="#i-chip"/></svg></span>
  <span class="grip snug"></span>
  <span class="tool corner"><svg class="off"><use href="#i-pencils"/></svg></span><span class="tool off"><svg><use href="#pen"/></svg></span><span class="tool off"><svg><use href="#i-saveed"/></svg></span><span class="tool off"><svg><use href="#i-addpts"/></svg></span><span class="tool off"><svg><use href="#i-vertex"/></svg></span><span class="drop"></span>
  <span class="tool off"><svg><use href="#i-attrs"/></svg></span><span class="tool off"><svg><use href="#i-trash"/></svg></span><span class="tool off"><svg><use href="#i-cut"/></svg></span><span class="tool off"><svg><use href="#i-copy"/></svg></span><span class="tool off"><svg><use href="#i-paste"/></svg></span><span class="tool off"><svg><use href="#i-undo"/></svg></span><span class="tool off"><svg><use href="#i-redo"/></svg></span>
  <span class="grip snug"></span>
  <span class="tool"><svg><use href="#i-abc"/></svg></span><span class="tool"><svg><use href="#i-diag"/></svg></span><span class="tool"><svg><use href="#i-abpinsel"/></svg></span><span class="tool off"><svg><use href="#i-abpin"/></svg></span><span class="tool off"><svg><use href="#i-abceye"/></svg></span><span class="tool off"><svg><use href="#i-abcarr"/></svg></span><span class="tool off"><svg><use href="#i-abcrot"/></svg></span><span class="tool off"><svg><use href="#i-abcpen"/></svg></span>
  <span class="grip"></span>
  <span class="tool"><svg><use href="#i-globebino"/></svg></span>
  <span class="grip"></span>
  <span class="tool"><svg><use href="#i-python"/></svg></span>
  <span class="grip"></span>
  <span class="tool"><svg><use href="#i-help"/></svg></span>
  <span class="grip"></span>
</nav>

<main class="workspace">
  <aside class="left">
    <div class="dock-title"><span>Browser</span><svg><use href="#d-float"/></svg><svg><use href="#d-close"/></svg></div>
    <div class="minibar browser-bar"><span><svg><use href="#s-add"/></svg></span><span><svg><use href="#i-refresh"/></svg></span><span><svg><use href="#s-filter"/></svg></span><span><svg><use href="#s-up"/></svg></span><span><svg><use href="#i-info"/></svg></span></div>
    <ul class="tree">
      <li><b></b><svg><use href="#t-star"/></svg>Favorites</li>
      <li class="has"><b></b><svg><use href="#t-project"/></svg>Project Home</li>
      <li class="has"><b></b><svg><use href="#t-home"/></svg>Home</li>
      <li class="has"><b></b><svg><use href="#folder"/></svg>/</li>
      <li class="has"><b></b><svg><use href="#folder"/></svg>/Volumes</li>
      <li><b></b><svg><use href="#boxglobe"/></svg>GeoPackage</li>
      <li><b></b><svg><use href="#feather"/></svg>SpatiaLite</li>
      <li><b></b><svg><use href="#t-pg"/></svg>PostGIS</li>
      <li><b></b><svg><use href="#t-ms"/></svg>MSSQL</li>
      <li><b></b><svg><use href="#t-db2"/></svg>DB2</li>
      <li><b></b><svg><use href="#globe"/></svg>WMS/WMTS</li>
      <li class="has"><b></b><svg><use href="#globe"/></svg>XYZ Tiles</li>
      <li><b></b><svg><use href="#t-wcs"/></svg>WCS</li>
      <li><b></b><svg><use href="#t-wfs"/></svg>WFS</li>
      <li><b></b><svg><use href="#wire"/></svg>OWS</li>
      <li><b></b><svg><use href="#t-arcmap"/></svg>ArcGisMapServer</li>
      <li><b></b><svg><use href="#t-arcfs"/></svg>ArcGisFeatureServer</li>
      <li><b></b><svg><use href="#t-node"/></svg>GeoNode</li>
    </ul>
    <div class="hsplit"><i></i></div>
    <div class="dock-title layers-title"><span>Layers</span><svg><use href="#d-float"/></svg><svg><use href="#d-close"/></svg></div>
    <div class="minibar layers-bar"><span><svg><use href="#s-brush"/></svg></span><span><svg><use href="#s-group"/></svg></span><span><svg><use href="#s-eye"/></svg></span><span><svg><use href="#s-filter"/></svg></span><span><svg><use href="#s-expr"/></svg></span><em class="drop"></em><span><svg><use href="#s-down"/></svg></span><span><svg><use href="#s-up"/></svg></span><span><svg><use href="#s-remove"/></svg></span></div>
    <div class="layers">
      <ul>
        <li class="ramp"><i class="black"></i>-384.605</li>
        <li class="ramp"><i></i>0</li>
        <li class="current"><span class="check on"></span><i class="dot blue"></i><u>VT_Lake_Champlain_B...</u></li>
        <li class="hidden-layer"><span class="check"></span><i class="dot green"></i><em>VT_Lake_Champlain_B...</em></li>
      </ul>
      <div class="scroll layers-scroll"><b class="up"></b><i class="thumb"></i><i class="rail"></i><i class="page"></i><b class="down"></b></div>
    </div>
  </aside>
  <div class="vsplit"><i></i></div>
  <section class="center">
    <svg class="map" id="map" viewBox="493.500 199.500 1124 954"></svg>
    <div class="hsplit mid"><i></i></div>
    <div class="dock-title log-title"><span>Log Messages</span><svg><use href="#d-float"/></svg><svg><use href="#d-close"/></svg></div>
    <div class="tabs">
      <span class="tab active">General<svg><use href="#x-tab"/></svg></span><span class="tab python">Python warning<svg><use href="#x-tab"/></svg></span><span class="tab plugins">Plugins<svg><use href="#x-tab"/></svg></span>
    </div>
    <div class="pane"><div class="log">
      <div class="lines">
        <p class="in">SVG Search Paths: /Applications/QGIS3.app/Contents/MacOS/../Resources/svg/</p>
        <p class="in more">/Users/Rosalie/Library/Application Support/QGIS/QGIS3/profiles/default/svg/</p>
        <p class="in">User DB Path: /Applications/QGIS3.app/Contents/MacOS/../Resources/</p>
        <p>resources/qgis.db</p>
        <p class="in">Auth DB Path: /Users/Rosalie/Library/Application Support/QGIS/QGIS3/profiles/</p>
        <p>default/qgis-auth.db</p>
      </div>
      <div class="scroll log-scroll"><b class="up"></b><i class="thumb"></i><i class="rail"></i><i class="page"></i><b class="down"></b></div>
    </div></div>
  </section>
  <div class="vsplit right-split"><i></i></div>
  <aside class="right">
    <div class="dock-title"><span>Identify Results</span><svg><use href="#d-float"/></svg><svg><use href="#d-close"/></svg></div>
    <div class="minibar identify-bar"><span><svg><use href="#s-form"/></svg></span><hr><span><svg><use href="#s-down"/></svg></span><span><svg><use href="#s-up"/></svg></span><span><svg><use href="#s-stardown"/></svg></span><hr><span><svg><use href="#i-desel"/></svg></span><hr><span><svg><use href="#i-copy"/></svg></span><span class="off"><svg><use href="#s-print"/></svg></span><span><svg><use href="#s-idsel"/></svg></span><em class="drop"></em></div>
    <div class="results">
      <div class="head"><span>Feature</span><span>Value</span></div>
      <div class="row l1 open"><span><b></b>VT_Lake_Champlain_Bat...</span><span></span></div>
      <div class="row l2 open sel"><span><b></b>OBJECTID</span><span>9051</span></div>
      <div class="row l3 shut"><span><b></b>(Derived)</span><span></span></div>
      <div class="row l3 shut"><span><b></b>(Actions)</span><span></span></div>
      <div class="row l3"><span><b></b>X</span><span>441217.03000000026</span></div>
      <div class="row l3"><span><b></b>Y</span><span>216057.66000000015</span></div>
      <div class="row l3"><span><b></b>OBJECTID</span><span>9051</span></div>
      <div class="row l3"><span><b></b>DEPTH_FT</span><span>-120</span></div>
    </div>
    <div class="form-row mode"><label>Mode</label><span class="combo">Current layer</span><span class="check"></span><span class="auto">Auto open form</span></div>
    <div class="form-row view"><label>View</label><span class="combo">Tree</span><span class="button">Help</span></div>
  </aside>
</main>

<footer class="status">
  <div class="locate"><svg viewBox="0 0 26 26"><circle cx="10" cy="10" r="8" fill="none" stroke="#888" stroke-width="2"/><path d="M16 16L24 24" stroke="#888" stroke-width="2.500"/></svg>Type to locate (⌘K)</div>
  <span class="label coord-label">Coordinate</span><span class="field coord">434266,210989</span>
  <svg class="bug" viewBox="0 0 30 32"><ellipse cx="18" cy="25" rx="11" ry="7" fill="#b9a9a4"/><path d="M5 2Q10 -1 13 5L16 14Q24 14 23 23Q20 31 14 29Q8 27 9 19L3 9Z" fill="#fff" stroke="#000" stroke-width="2.200"/><path d="M8 3L12 12M4 7L10 15" stroke="#000" stroke-width="2.500"/><circle cx="16" cy="24" r="3.500" fill="none" stroke="#000" stroke-width="2"/><path d="M21 6H23M25 3H27M1 20H3M3 24H5M20 10H22" stroke="#000" stroke-width="2"/></svg>
  <span class="label scale-label">Scale</span><span class="field scale">1:90415<b></b></span>
  <svg class="lock" viewBox="0 0 24 30"><path d="M5 16V8Q5 1 12 1Q19 1 19 8V16" fill="none" stroke="#8a8a8a" stroke-width="3"/><rect y="15" width="24" height="15" rx="2" fill="#5f5f5f"/></svg>
  <span class="label mag-label">Magnifier</span><span class="field mag">100%<b></b></span>
  <span class="label rot-label">Rotation</span><span class="field rot">0.0 °<b></b></span>
  <span class="check on"></span><span class="label render-label">Render</span>
  <svg class="crs" viewBox="0 0 30 28"><path d="M8 1H22L29 11Q27 24 15 27Q3 24 1 11Z" fill="#d5d5d5" stroke="#6e6e6e" stroke-width="1.600"/><path d="M1 11H29M4 6H26M4 18H26M10 1Q6 14 13 27M20 1Q24 14 17 27M15 1V27" fill="none" stroke="#6e6e6e" stroke-width="1.600"/></svg>
  <span class="label epsg">EPSG:32145</span>
  <span class="messages"><svg viewBox="0 0 34 32"><path d="M17 1Q33 2 33 14Q33 22 27 24Q28 28 31 31Q24 30 21 26Q1 28 1 13Q2 2 17 1Z" fill="#666"/></svg></span>
</footer>
</div>
<script src="map.js"></script>
</body>
</html>
```
FILE: styles.css
```css
*{box-sizing:border-box}
body{margin:0;background:#ebebeb;color:#000;font-family:Inter,"Noto Sans",sans-serif;font-size:25px}
.defs{position:absolute}
.window{width:2554px;height:1516px;overflow:hidden;display:flex;flex-direction:column;background:#ebebeb}
h1,p,ul{margin:0;padding:0}
ul{list-style:none}
.glyph-a{font:400 27px "Noto Sans",sans-serif;fill:#444}
.glyph-11{font:700 19px "Noto Sans",sans-serif;fill:#555}
.glyph-i{font:italic 700 24px "Liberation Serif",serif;fill:#fff}
.glyph-sigma{font:700 54px "Liberation Serif",serif;fill:#a808a8;stroke:#5c065c;stroke-width:1}
.glyph-t{font:400 30px "Liberation Serif",serif;fill:#444}
.glyph-abc{font:400 16px "Noto Sans",sans-serif;fill:#333}
.glyph-q{font:400 36px "Liberation Serif",serif;fill:#fff}
.glyph-eps{font:400 36px "Liberation Serif",serif;fill:#7a3b80}
.glyph-db2{font:400 12px Inter,sans-serif;fill:#fff}

.titlebar{flex:none;height:42px;display:grid;grid-template-columns:1fr auto 1fr;align-items:center;background:linear-gradient(#e9e9e9,#cfcfcf);border-bottom:2px solid #ababab}
.titlebar h1{font-size:25.500px;font-weight:400;color:#444;line-height:38px;white-space:nowrap;padding-top:1px}
.lights{display:flex;gap:16px;padding-left:12px}
.lights i{width:24px;height:24px;border-radius:50%;border:1px solid}
.red{background:#fc605b;border-color:#e0443e}
.amber{background:#fdbc40;border-color:#dea033}
.green{background:#34c84a;border-color:#24a93a}

.toolbar{flex:none;height:77px;display:flex;align-items:center;background:linear-gradient(#f6f6f6,#ebebeb);border-bottom:2px solid #b2b2b2}
.toolbar.second{height:78px;padding-top:2px}
.tool{flex:none;width:66px;height:62px;display:flex;align-items:center;justify-content:center;position:relative}
.tool svg{width:48px;height:48px}
.tool.pressed::before{content:"";position:absolute;z-index:0;inset:0 1px;background:#d9d9d9;border:2px solid #a9a9a9;border-radius:5px}
.tool.pressed svg{position:relative}
.off{opacity:.34;filter:grayscale(.65)}
.corner::after{content:"";position:absolute;right:6px;bottom:4px;border:6px solid transparent;border-top-color:#4c4c4c;border-bottom:0}
.grip{flex:none;width:33px;align-self:stretch;padding:22px 0 19px 15px;position:relative}
.grip.first{width:21px;padding-left:5px}
.grip.snug{width:31px;padding-left:15px}
.grip::after{content:"";display:block;width:11px;height:100%;background:radial-gradient(circle,#bcbcbc 1.100px,transparent 1.500px) 0 0/6px 6px}
.drop{flex:none;width:24px;display:flex;justify-content:center}
.drop::after{content:"";border:8px solid transparent;border-top-color:#4c4c4c;border-bottom:0}
.toolbar .drop{padding-right:4px}

.workspace{flex:none;height:1260px;display:grid;grid-template-columns:479px 13px 1127px 13px 922px}
.workspace>*{min-width:0}
.left,.center,.right{display:flex;flex-direction:column}
.dock-title{flex:none;height:40px;display:flex;align-items:center;gap:6px;padding:0 3px 0 4px;font-size:21.500px;color:#222}
.dock-title span{flex:1}
.dock-title svg{width:22px;height:22px}
.minibar{flex:none;display:flex;align-items:center;padding-left:3px}
.minibar span{width:50px;display:flex;justify-content:center}
.minibar svg{width:32px;height:32px}
.minibar hr{width:1px;height:22px;margin:0 7px;border:0;border-left:2px solid #fff;background:#d0d0d0}
.minibar .drop{width:24px}
.browser-bar,.identify-bar{height:61px;padding-bottom:4px}
.identify-bar{padding-left:6px}
.identify-bar hr{margin:0 6px}
.tree{height:907px;background:#fff;border:2px solid #b5b5b5;border-left:0}
.tree li{height:36px;display:flex;align-items:center;padding-left:13px;letter-spacing:.3px}
.tree svg{width:32px;height:32px;margin:0 12px 0 18px}
.tree b{width:13px;height:14px}
.has b{border-left:9px solid #5c5c5c;border-top:7px solid transparent;border-bottom:7px solid transparent}
.hsplit{height:12px;display:flex;justify-content:center;align-items:center}
.hsplit i{width:34px;height:4px;background:repeating-linear-gradient(90deg,#c2c2c2 0 2px,transparent 2px 6px);background-size:34px 2px;background-repeat:no-repeat}
.layers-title{height:40px}
.layers-bar{height:61px;padding-bottom:4px}
.layers{height:140px;border:2px solid #b5b5b5;border-left:0;background:#fff;display:grid;grid-template-columns:1fr 28px;overflow:hidden}
.layers ul{overflow:hidden;height:136px}
.layers li{height:36px;display:flex;align-items:center;white-space:nowrap}
.ramp{padding-left:84px;letter-spacing:.6px}
.ramp i{width:32px;height:32px;margin-right:12px}
.ramp .black{background:#000}
.current{background:#dadada;font-weight:700}
.current,.hidden-layer{padding-left:44px;letter-spacing:.53px}
.hidden-layer em{font-weight:700;color:#b5b5b5;padding-left:2px}
.current u{text-underline-offset:5px;text-decoration-thickness:2px}
.check{flex:none;width:27px;height:28px;background:#fff;border:2px solid #b0b0b0}
.check.on::after{content:"";display:block;width:8px;height:15px;margin:1px 0 0 7px;border:solid #222;border-width:0 3px 3px 0;transform:rotate(40deg)}
.dot{border-radius:50%;flex:none}
.dot.blue{width:12px;height:12px;background:#5f93bb;margin:0 22px 0 23px}
.dot.green{width:11px;height:11px;background:#6aa84f;border:2px solid #222;margin:0 23px 0 23px}
.scroll{display:flex;flex-direction:column;border-left:1px solid #bbb;background:#f6f6f6}
.scroll b{flex:none;height:26px;display:grid;place-items:center}
.scroll b::after{content:"";border:8px solid transparent;border-top:0;border-bottom:10px solid #4c4c4c}
.scroll .down::after{transform:rotate(180deg)}
.thumb{border:2px solid #bcbcbc;border-width:2px 0;background:#e4e4e4}
.rail{background:linear-gradient(90deg,#eee,#fff);flex:1}
.page{border:2px solid #bcbcbc;border-width:2px 0;background:#ececec}
.layers-scroll .thumb{height:23px}
.layers-scroll .page{height:8px}
.log-scroll .thumb{height:58px}
.log-scroll .page{height:18px}

.vsplit{display:flex;justify-content:center;padding-top:617px}
.vsplit i{width:2px;height:34px;background:repeating-linear-gradient(#c2c2c2 0 2px,transparent 2px 6px)}
.map{flex:none;width:1127px;height:957px;margin-top:1px;border:1.500px solid #b5b5b5;background:#fff}
.hsplit.mid{height:13px}
.log-title{height:38px;padding-left:8px}
.tabs{height:59px;display:flex;align-items:flex-end;position:relative;z-index:1}
.tab{height:55px;display:flex;align-items:center;background:#e6e6e6;border:2px solid #b2b2b2;border-left-width:0;border-bottom:0;border-radius:4px 4px 0 0;padding:3px 0 0 23px;white-space:nowrap;color:#222;letter-spacing:.25px}
.tab svg{width:26px;height:24px;margin-left:14px}
.tab.active{height:59px;width:193px;background:#fcfcfc;border-left-width:2px;margin-bottom:-2px;padding:0 0 0 23px}
.python{width:288px}
.plugins{width:184px}
.pane{height:190px;border:2px solid #aaa;background:#f4f4f4;padding:2px}
.log{height:182px;border:1px solid #b5b5b5;background:#fff;display:grid;grid-template-columns:1fr 28px;overflow:hidden;color:#262626}
.lines{overflow:hidden;padding:4px 0 0 9px;height:180px;letter-spacing:.38px}
.lines p{height:32.200px;line-height:32.200px;white-space:nowrap}
.lines .in{padding-left:95px}
.lines .more{padding-left:101px}

.right .dock-title{padding-left:8px}
.results{height:1025px;border:2px solid #b5b5b5;border-right:0;background:#fff}
.head{display:grid;grid-template-columns:375px 1fr;height:34px;background:linear-gradient(#fdfdfd,#ebebeb);border-bottom:2px solid #b0b0b0;font-size:21.500px;color:#222}
.head span{padding-left:4px;line-height:33px}
.head span+span{border-left:2px solid #c4c4c4;padding-left:5px}
.row{display:grid;grid-template-columns:375px 1fr;height:32px;line-height:32px;white-space:nowrap;letter-spacing:.2px}
.row span{display:flex;align-items:center}
.row span+span{padding-left:8px;letter-spacing:.7px}
.row:nth-child(2n+3){background:#f5f5f5}
.results .sel{background:#dadada}
.row b{flex:none;width:14px;display:flex;margin-right:20px}
.l1 span:first-child{padding-left:13px}
.l2 span:first-child{padding-left:52px}
.l3 span:first-child{padding-left:92px}
.open b::after{content:"";border:7px solid transparent;border-top:9px solid #5c5c5c;border-bottom:0}
.shut b::after{content:"";border:7px solid transparent;border-left:9px solid #5c5c5c;border-right:0;margin-left:3px}
.form-row{display:flex;align-items:center;padding-left:10px;color:#000}
.mode{height:70px}
.view{height:56px}
.mode label{width:82px}
.view label{width:71px;color:#aaa}
.combo{height:48px;display:flex;align-items:center;justify-content:space-between;background:linear-gradient(#fff,#ececec);border:2px solid #a9a9a9;border-radius:5px;padding:0 12px 0 8px;letter-spacing:.1px}
.combo::after{content:"";border:8px solid transparent;border-top:9px solid #4c4c4c;border-bottom:0}
.mode .combo{width:331px}
.mode .check{margin-left:251px}
.auto{margin-left:11px;color:#222;letter-spacing:.4px}
.view .combo{width:158px;color:#8d8d8d;border-color:#bcbcbc;padding-right:14px}
.view .combo::after{border-top-color:#b5b5b5}
.button{margin-left:603px;width:71px;height:38px;display:grid;place-items:center;font-size:21.500px;background:linear-gradient(#fff,#f1f1f1);border:2px solid #aaa;border-radius:5px}

.status{flex:1;display:flex;align-items:center;padding:5px 4px 1px;font-size:21.500px;white-space:nowrap;background:linear-gradient(90deg,#ebebeb 590px,transparent 690px,transparent 1850px,#ebebeb 1980px),linear-gradient(#e9e9e9,#d8d8d8)}
.locate{flex:none;width:437px;height:47px;display:flex;align-items:center;gap:14px;padding-left:15px;margin-top:-3px;background:#fff;border:2px solid #aaa;border-radius:5px;font-size:25.500px;letter-spacing:.2px;color:#808080}
.locate svg{width:26px;height:26px}
.label{flex:none}
.coord-label{width:121px;margin-left:398px}
.field{flex:none;height:43px;display:flex;align-items:center;justify-content:space-between;padding-left:8px;background:#fff;border:2px solid #a9a9a9;border-radius:5px}
.coord{width:191px;background:linear-gradient(#fff,#f0f0f0);letter-spacing:.4px}
.bug{flex:none;width:30px;height:32px;margin:0 27px 0 10px}
.scale-label{width:64px}
.scale{width:187px;height:47px}
.field b{align-self:stretch;width:39px;border-left:2px solid #b5b5b5;display:flex;flex-direction:column;align-items:center;justify-content:center;gap:10px}
.field b::after{content:"";border:8px solid transparent;border-top:9px solid #4c4c4c;border-bottom:0}
.mag b::before,.rot b::before{content:"";border:7px solid transparent;border-bottom:8px solid #4c4c4c;border-top:0}
.mag b::after,.rot b::after{border:7px solid transparent;border-top:8px solid #4c4c4c;border-bottom:0}
.scale b{background:#f0f0f0}
.lock{flex:none;width:24px;height:30px;margin:0 18px 0 24px}
.mag-label{width:105px}
.mag{width:192px;height:45px;background:linear-gradient(#fff,#f0f0f0)}
.mag b,.rot b{width:27px}
.rot-label{width:105px;margin-left:21px}
.rot{width:184px}
.status .check{margin:0 11px 0 14px}
.render-label{width:108px;color:#222}
.crs{flex:none;width:30px;height:28px;margin-right:9px}
.epsg{width:160px;letter-spacing:.3px}
.messages{flex:none;width:47px;height:49px;display:grid;place-items:center;background:#dadada;border:2px solid #aaa;border-radius:5px}
.messages svg{width:34px;height:32px}
```
FILE: map.js
```js
// Soundings are stored per survey sheet; each sheet has its own origin and scale.
const sheets = [
  { x: 490, y: 195, sx: 2.703, sy: 3,
    points: `138,21 379,36 638,45 771,84 911,54 1025,102 1157,93 500,135 238,162 89,231 589,297 835,288 1087,261 1095,312 219,372 454,369 35,384 724,471 895,522 1081,507 1276,447 1249,534 1465,435 157,567 362,558 543,552 46,594 730,612 78,681 222,732 514,705 1473,603 1254,696 1457,732 1454,783 1400,819 1492,822 1457,873 24,765 78,765 27,804 70,870 195,858 373,858 652,831 795,816 987,822 1163,807 1265,900 508,921 143,984 330,1026 881,1005 1149,1011 1365,1020 1492,1023 505,1080 697,1077 1257,1134 1468,1179 989,1191 78,1140 135,1194 251,1179 114,1257 243,1311 416,1311 673,1317 852,1302 1233,1314 1490,1335 989,1413 43,1416
      27,1083 41,1110 20,1130 30,1120 25,1140 20,1165 30,1160 25,1180 35,1153 15,1220 27,1235 49,1227 25,1275 40,1280 50,1290 65,1290 30,1300 45,1310 25,1325 45,1325 68,1335 85,1338 117,1344 30,1357
      1379,54 1365,105 1441,99 1368,130 1409,141 1473,141 1498,153 1371,153 1357,165 1454,177 1295,216 1330,201 1473,213 1495,240 1400,215 1332,324 1362,320 1375,340 1381,345 1384,375 1418,345 1425,320 1476,324 1503,321 1482,357 1527,351 1544,300 1544,339 1562,342`,
    shores: [
      "1350,210 1345,230 1357,256 1350,288 1375,303 1403,308 1427,300 1460,290 1475,280 1445,261 1413,240 1390,218 1365,204",
      "1358,215 1366,250 1362,285", "1450,255 1470,270 1468,295",
      "32,1108 40,1125 20,1130 22,1160 35,1153", "20,1262 48,1272 55,1295 48,1325 25,1325 20,1300 32,1281"] },
  { x: 1060, y: 195, sx: 2.751, sy: 3,
    points: `58,105 192,87 415,66 489,120 627,81 699,45 848,84 949,60 586,165 693,165 745,204 781,189 958,183 143,210 47,237 272,258 377,237 514,243 654,234 619,279 770,237 809,238 826,261 737,250 720,267 927,288 998,264 135,321 487,336 682,345 663,378 820,372 1007,363 25,342 50,345 437,408 555,399 289,435 294,411 921,405 993,444 129,459 52,495 252,495 281,504 314,483 366,477 434,492 360,527 345,524 319,546 506,522 580,489 636,493 619,475 560,522 558,549 627,535 613,522 658,528 787,534 905,513 141,603 281,606 407,627 751,612 1034,618 137,699 314,702 797,675 891,762 1075,738 1260,720 357,810 426,792 449,762 463,678 744,765 734,793 815,813 1026,813 1166,813 1254,822 60,831 231,831 371,876 461,867 487,890 745,909 839,921 949,900 1106,918 1224,918 396,945 483,936 522,923 505,975 456,984 461,1025 687,948 657,975 668,982 135,993 256,1005 341,963 355,993 333,990 314,1035 366,1057 399,1059 110,1095 261,1089 324,1070 371,1092 748,1044 902,1035 1045,1014 1208,1017 1298,1065 720,1143 800,1137 913,1140 1065,1155 1230,1131 1338,1150 1365,1134 1375,1092 1373,1044 1396,1005 1391,921 1378,955 1341,942 1376,850 1361,873 1334,780 1311,798 1326,732 1311,690 1352,684 1304,628 1279,643 1238,625 1194,633 1166,658 1139,612 1102,612 71,1212 316,1230 258,1167 294,1180 347,1190 385,1240 651,1179 693,1248 831,1269 938,1248 1073,1290 1221,1251 1394,1269 1399,1183 1393,1210 245,1311 363,1303 341,1341 97,1353 179,1362 630,1329 949,1368 1169,1365 1306,1326 753,1401 291,1419 333,1388 326,1450 1317,1446 1399,1410 1425,1424 1435,1275 1442,1303 1441,1335 1441,1375 553,1386 545,1430
      1155,22 1110,63 1135,78 1075,123 1060,180 1040,177 1060,205 1048,250 1038,273 1060,300 1072,330 1085,360 1070,420 1072,435 1040,478 1018,543 500,585 498,605 682,585 664,605 610,585 683,655 697,725 720,830 722,873 463,805 616,1200 692,1088 705,1030 435,1063 285,1115 283,1150 320,1090 330,1110 345,1130 320,1145 350,1150 340,1100 300,1120`,
    shores: [
      "1275,22 1250,22 1222,30 1188,67 1178,95 1155,105 1140,125 1110,117 1097,140 1095,165 1090,190 1080,215 1072,245 1082,275 1105,268 1122,290 1120,320 1117,348 1103,370 1103,397 1097,435 1085,465 1059,495 1045,520 1045,543 1065,565 1095,585 1140,590 1184,594 1220,597 1245,600 1297,594 1330,600 1365,608 1387,640 1387,700 1387,740 1405,755 1409,798 1416,846 1424,888 1438,942 1430,984 1421,1029 1412,1060 1414,1092 1420,1125 1431,1150 1434,1195 1440,1243 1468,1262 1486,1277 1485,1310 1475,1365 1461,1392 1452,1420 1455,1450",
      "1075,275 1083,320 1100,350", "1175,75 1150,95", "1140,105 1165,118",
      "575,590 540,620 505,632 500,660 490,687 476,720 480,755 483,783 487,822 505,860 522,882 550,905 555,930 547,966 530,1000 518,1020 490,1050 465,1065 435,1085 420,1105 402,1140 380,1165 355,1155 330,1130 320,1095",
      "318,1085 340,1105 350,1135 325,1150 305,1130 313,1115",
      "355,1155 385,1190 408,1213 418,1265 423,1303 400,1330 367,1350 352,1385 352,1410 352,1440 360,1470",
      "565,592 592,594 600,630 628,628 650,640 658,687 665,720 692,752 704,793 703,825 690,863 680,900 645,927 620,955 615,990 636,1022 668,1044 695,1045 688,1068 665,1085 640,1128 622,1158 610,1190 588,1208 575,1240 560,1270 544,1293 536,1320 531,1356 525,1385 514,1420 515,1435 532,1453 540,1470"] },
  { x: 490, y: 680, sx: 2.703, sy: 3,
    points: `235,15 481,21 762,18 1252,13 1465,5 54,84 357,93 208,141 476,171 633,120 819,195 960,144 1119,153 1365,189 173,267 333,276 487,294 681,297 897,312 1098,327 1249,312 1395,306 1560,297 24,489 151,489 338,489 573,516 746,570 981,477 1176,471 1395,441 1530,459 284,588 516,648 62,642 1319,549 1484,558 1165,600 1384,675 981,696 203,768 435,792 633,798 844,804 57,831 1179,762 1217,793 1219,817 1265,792 1371,810 1076,834 522,891 1169,867 1192,855 1306,879 1452,846 1171,918 981,942 1100,963 1160,975 1236,948 1319,939 1395,927 1446,924 1438,963 1411,958 33,997 178,1011 379,1008 751,1023 530,1077 1076,1047 1157,1053 1263,1047 1298,1002 1333,973 1368,978 59,1149 259,1179 1184,1161 995,1182 1279,1221 765,1239 1295,1268 146,1296 387,1308 573,1320 949,1329 1141,1323 1200,1329 1241,1323 1270,1307 1318,1299 1298,1299 781,1398 1184,1417 1487,633 1525,642 1562,627 1462,723 1525,705 1498,714 1487,783 1487,877 1485,907 1308,1060 1298,1083 1292,1146 1325,1180 1352,1183 1332,1235 1318,1368 1336,1404`,
    shores: ["1560,670 1552,700 1540,730 1533,760 1520,790 1507,815 1511,845 1520,880 1520,905 1511,938 1482,968 1445,990 1411,1013 1380,1020 1350,1010 1332,1022 1327,1060 1335,1090 1325,1120 1310,1135 1355,1140 1377,1153 1382,1190 1375,1220 1355,1240 1354,1262 1350,1300 1345,1325 1348,1350 1366,1388 1380,1412 1413,1417"] },
  { x: 1060, y: 680, sx: 2.751, sy: 3,
    points: `185,5 657,3 827,24 974,30 1089,15 1227,72 1376,99 827,132 38,165 168,132 875,192 965,174 1112,153 1224,186 1309,210 822,258 154,249 968,306 1130,288 1323,309 848,333 1054,363 1251,354 253,327 1328,387 110,396 242,408 1013,408 1153,423 1276,435 181,510 1073,516 1213,522 55,567 1098,603 1191,615 985,636 1106,729 1210,720 998,738 976,808 982,780 960,835 1031,861 1042,830 1067,803 1120,841 1098,818 1180,834 1172,808 1213,840 1249,790 1246,759 1290,745 1279,727 1287,672 1260,669 1284,600 1287,563 1302,520 1298,495 1257,888 1210,909 1188,912 1153,921 1130,924 912,724 920,690 909,615 885,637 967,516 925,483 885,423 848,411 776,411 751,375 739,345 762,300 785,303 777,218 777,238 790,186 770,157 752,204 735,180 733,260 731,84 635,80 616,69 630,112 573,45 580,108 335,54 310,75 313,135 263,208 317,188 294,186 372,235 338,282 388,288 333,342 379,333 289,384 317,390 345,400 305,440 286,457 263,480 272,530 226,570 174,603 160,623 129,630 93,645 66,669 150,690 128,699 25,625 1430,24 1422,75 1435,135 1430,157 1412,198 1422,246 1390,310 1376,306 1368,345`,
    shores: [
      "355,-10 362,24 371,66 358,95 358,127 345,155 357,188 399,198 425,220 428,260 429,294 415,340 393,361 366,390 362,425 325,462 310,500 302,531 286,555 260,590 226,617 192,632 185,665 165,700 135,744 95,755 60,745 40,710 20,675 13,700 5,740 -8,765",
      "532,-10 536,30 562,57 555,102 570,130 610,150 650,153 677,104 690,85 700,110 707,160 712,200 716,230 735,265 720,306 705,345 709,384 730,410 767,441 808,438 830,415 850,445 865,480 905,495 932,522 900,540 893,560 877,603 860,630 855,654 880,680 885,738 903,786 922,830 915,865 937,897 971,906 995,885 995,930 996,958 1000,983 1025,960 1040,935 1078,936 1104,930",
      "1455,-10 1455,30 1449,80 1457,131 1455,158 1452,195 1450,230 1447,264 1442,306 1411,333 1380,355 1370,385 1349,423 1335,475 1328,510 1324,546 1322,590 1335,615 1312,635 1320,666 1330,690 1320,726 1325,745 1311,768 1300,810 1300,840 1284,864"] }
];

const read = (sheet, text) => text.trim().split(/\s+/).map(pair => {
  const [px, py] = pair.split(",").map(Number);
  return [sheet.x + px / sheet.sx, sheet.y + py / sheet.sy];
});
const scattered = [], dense = [], tops = [];
for (const sheet of sheets) {
  scattered.push(...read(sheet, sheet.points));
  for (const line of sheet.shores) {
    const pts = read(sheet, line);
    tops.push(...pts.filter((p, i) => i % 3 !== 1));
    for (let i = 1; i < pts.length; i++) {
      const [ax, ay] = pts[i - 1], [bx, by] = pts[i];
      const steps = Math.max(1, Math.round(Math.hypot(bx - ax, by - ay) / 2.2));
      for (let s = 0; s < steps; s++) {
        const wobble = ((i * 7 + s * 5) % 5 - 2) * 0.6;
        dense.push([ax + (bx - ax) * s / steps + wobble, ay + (by - ay) * s / steps - wobble]);
      }
    }
  }
}
const circle = ([x, y]) => `<circle cx="${x.toFixed(1)}" cy="${y.toFixed(1)}" r="6"/>`;
document.getElementById("map").innerHTML =
  `<g fill="#487ab6" stroke="#32597f" stroke-width="2">${[...scattered, ...dense, ...tops].map(circle).join("")}</g>` +
  `<circle cx="1389" cy="397" r="10" fill="#f00"/><circle cx="1389" cy="397" r="1.500" fill="#933"/>`;
```
